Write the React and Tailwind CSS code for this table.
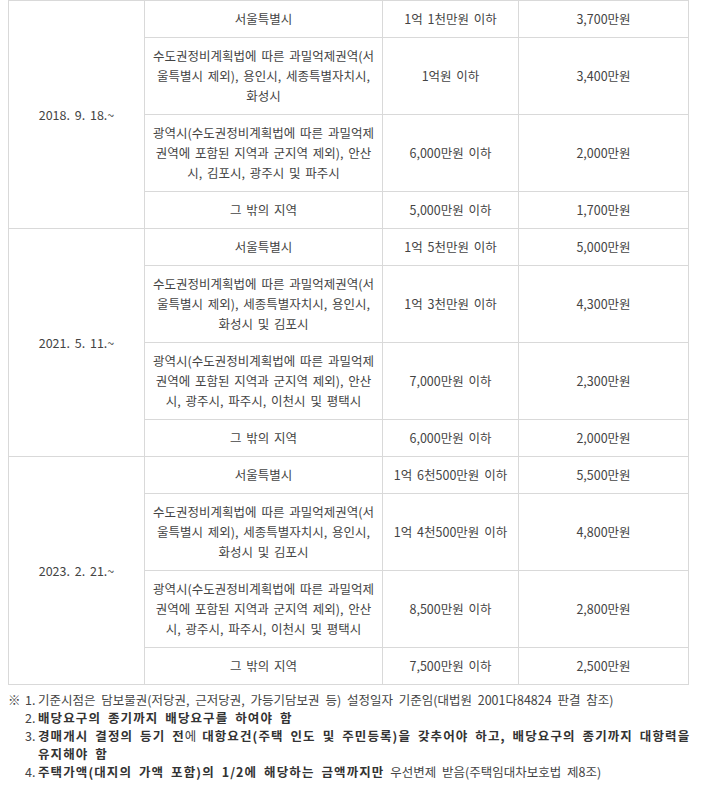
const groups = [
  {
    date: '2018. 9. 18.~',
    rows: [
      { area: ['서울특별시'], limit: '1억 1천만원 이하', amount: '3,700만원' },
      {
        area: ['수도권정비계획법에 따른 과밀억제권역(서', '울특별시 제외), 용인시, 세종특별자치시,', '화성시'],
        limit: '1억원 이하',
        amount: '3,400만원',
      },
      {
        area: ['광역시(수도권정비계획법에 따른 과밀억제', '권역에 포함된 지역과 군지역 제외), 안산', '시, 김포시, 광주시 및 파주시'],
        limit: '6,000만원 이하',
        amount: '2,000만원',
      },
      { area: ['그 밖의 지역'], limit: '5,000만원 이하', amount: '1,700만원' },
    ],
  },
  {
    date: '2021. 5. 11.~',
    rows: [
      { area: ['서울특별시'], limit: '1억 5천만원 이하', amount: '5,000만원' },
      {
        area: ['수도권정비계획법에 따른 과밀억제권역(서', '울특별시 제외), 세종특별자치시, 용인시,', '화성시 및 김포시'],
        limit: '1억 3천만원 이하',
        amount: '4,300만원',
      },
      {
        area: ['광역시(수도권정비계획법에 따른 과밀억제', '권역에 포함된 지역과 군지역 제외), 안산', '시, 광주시, 파주시, 이천시 및 평택시'],
        limit: '7,000만원 이하',
        amount: '2,300만원',
      },
      { area: ['그 밖의 지역'], limit: '6,000만원 이하', amount: '2,000만원' },
    ],
  },
  {
    date: '2023. 2. 21.~',
    rows: [
      { area: ['서울특별시'], limit: '1억 6천500만원 이하', amount: '5,500만원' },
      {
        area: ['수도권정비계획법에 따른 과밀억제권역(서', '울특별시 제외), 세종특별자치시, 용인시,', '화성시 및 김포시'],
        limit: '1억 4천500만원 이하',
        amount: '4,800만원',
      },
      {
        area: ['광역시(수도권정비계획법에 따른 과밀억제', '권역에 포함된 지역과 군지역 제외), 안산', '시, 광주시, 파주시, 이천시 및 평택시'],
        limit: '8,500만원 이하',
        amount: '2,800만원',
      },
      { area: ['그 밖의 지역'], limit: '7,500만원 이하', amount: '2,500만원' },
    ],
  },
];

const cell = 'border border-[#d9d9d9] px-1 py-2 text-center align-middle leading-5 whitespace-nowrap';
const strong = 'font-bold text-[#333] tracking-[1.1px]';
const num = 'inline-block w-[13px] shrink-0';

export default function App() {
  return (
    <div
      className="bg-white text-[12.5px] text-[#444] min-h-[792px]"
      style={{ fontFamily: '"Noto Sans CJK KR", "Liberation Sans", sans-serif' }}
    >
      <table className="ml-2 w-[680px] table-fixed border-collapse [word-spacing:2px]">
        <colgroup>
          <col className="w-[136px]" />
          <col className="w-[238px]" />
          <col className="w-[136px]" />
          <col className="w-[170px]" />
        </colgroup>
        <tbody>
          {groups.map((g) =>
            g.rows.map((r, i) => (
              <tr key={g.date + i}>
                {i === 0 && (
                  <td rowSpan={g.rows.length} className={cell}>
                    {g.date}
                  </td>
                )}
                <td className={cell}>
                  {r.area.map((line, j) => (
                    <div key={j}>{line}</div>
                  ))}
                </td>
                <td className={cell}>{r.limit}</td>
                <td className={cell}>{r.amount}</td>
              </tr>
            ))
          )}
        </tbody>
      </table>

      {/* 각주 */}
      <div className="mt-[6px] ml-2 flex leading-[18px] whitespace-nowrap [word-spacing:3px]">
        <span className="w-[17px] shrink-0">※</span>
        <ol className="flex flex-col">
          <li className="flex">
            <span className={num}>1.</span>
            <span>기준시점은 담보물권(저당권, 근저당권, 가등기담보권 등) 설정일자 기준임(대법원 2001다84824 판결 참조)</span>
          </li>
          <li className="flex">
            <span className={num}>2.</span>
            <span>
              <b className={strong}>배당요구의 종기까지 배당요구를 하여야 함</b>
            </span>
          </li>
          <li className="flex">
            <span className={num}>3.</span>
            <span>
              <b className={strong}>경매개시 결정의 등기 전</b>에{' '}
              <b className={strong}>대항요건(주택 인도 및 주민등록)을 갖추어야 하고, 배당요구의 종기까지 대항력을</b>
              <br />
              <b className={strong}>유지해야 함</b>
            </span>
          </li>
          <li className="flex">
            <span className={num}>4.</span>
            <span>
              <b className={strong}>주택가액(대지의 가액 포함)의 1/2에 해당하는 금액까지만</b> 우선변제 받음(주택임대차보호법 제8조)
            </span>
          </li>
        </ol>
      </div>
    </div>
  );
}
